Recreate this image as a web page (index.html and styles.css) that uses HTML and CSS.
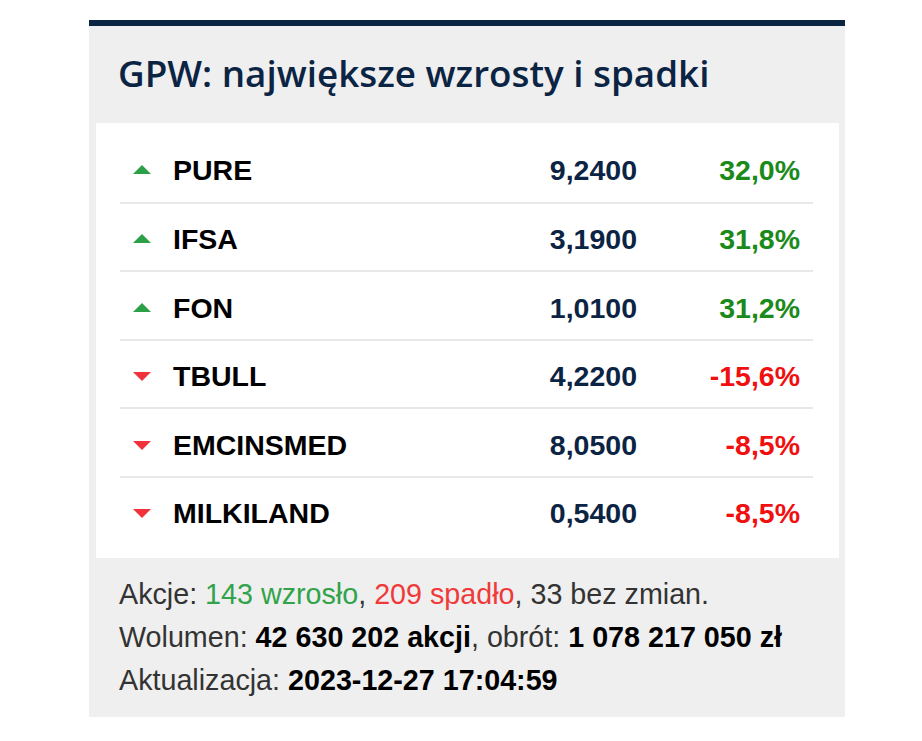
FILE: index.html
```html
<!DOCTYPE html>
<html lang="pl">
<head>
<meta charset="utf-8">
<title>GPW: największe wzrosty i spadki</title>
<link rel="stylesheet" href="styles.css">
</head>
<body>
<div class="widget">
  <h2 class="title">GPW: największe wzrosty i spadki</h2>
  <div class="panel">
    <div class="row">
      <span class="arrow up"></span><span class="name">PURE</span><span class="price">9,2400</span><span class="pct pos">32,0%</span>
    </div>
    <div class="row">
      <span class="arrow up"></span><span class="name">IFSA</span><span class="price">3,1900</span><span class="pct pos">31,8%</span>
    </div>
    <div class="row">
      <span class="arrow up"></span><span class="name">FON</span><span class="price">1,0100</span><span class="pct pos">31,2%</span>
    </div>
    <div class="row">
      <span class="arrow down"></span><span class="name">TBULL</span><span class="price">4,2200</span><span class="pct neg">-15,6%</span>
    </div>
    <div class="row">
      <span class="arrow down"></span><span class="name">EMCINSMED</span><span class="price">8,0500</span><span class="pct neg">-8,5%</span>
    </div>
    <div class="row">
      <span class="arrow down"></span><span class="name">MILKILAND</span><span class="price">0,5400</span><span class="pct neg">-8,5%</span>
    </div>
  </div>
  <div class="summary">
    <p>Akcje: <span class="g">143 wzrosło</span>, <span class="r">209 spadło</span>, 33 bez zmian.</p>
    <p>Wolumen: <b>42 630 202 akcji</b>, obrót: <b>1 078 217 050 zł</b></p>
    <p>Aktualizacja: <b>2023-12-27 17:04:59</b></p>
  </div>
</div>
</body>
</html>
```
FILE: styles.css
```css
html, body {
  margin: 0;
  padding: 0;
  background: #ffffff;
}
body {
  padding: 20px 0 0 89px;
}
.widget {
  width: 756px;
  background: #efefef;
  border-top: 6px solid #0c2444;
  box-sizing: border-box;
}
.title {
  margin: 0;
  padding: 22px 0 0 29px;
  height: 97px;
  box-sizing: border-box;
  font-family: "Open Sans", "DejaVu Sans", sans-serif;
  font-weight: 600;
  font-size: 36.8px;
  line-height: 50px;
  color: #0c2444;
}
.panel {
  margin: 0 6px 0 7px;
  background: #ffffff;
  padding: 10px 26px 14px 24px;
}
.row {
  display: grid;
  grid-template-columns: 53px 1fr auto 163px;
  align-items: center;
  height: 68.5px;
  padding: 6px 13px 0 0;
  border-top: 2px solid #e8e8e8;
  box-sizing: border-box;
  font-family: "Liberation Sans", Arial, sans-serif;
  font-weight: bold;
  font-size: 28.5px;
}
.row:first-child {
  border-top: none;
}
.arrow {
  width: 0;
  height: 0;
  margin-left: 13px;
  border-left: 9px solid transparent;
  border-right: 9px solid transparent;
}
.arrow.up {
  border-bottom: 9px solid #2ca047;
  margin-top: -2px;
}
.arrow.down {
  border-top: 9px solid #f0323c;
  margin-top: 0;
}
.name {
  color: #000000;
}
.price {
  color: #0c2444;
  text-align: right;
}
.pct {
  text-align: right;
}
.pct.pos {
  color: #1a8a1a;
}
.pct.neg {
  color: #f01010;
}
.summary {
  padding: 15px 0 15px 30px;
  font-family: "Liberation Sans", Arial, sans-serif;
  font-size: 28.7px;
  line-height: 43px;
  color: #333333;
}
.summary p {
  margin: 0;
}
.summary b {
  color: #000000;
}
.summary .g {
  color: #31a34a;
}
.summary .r {
  color: #f03a3a;
}
```
